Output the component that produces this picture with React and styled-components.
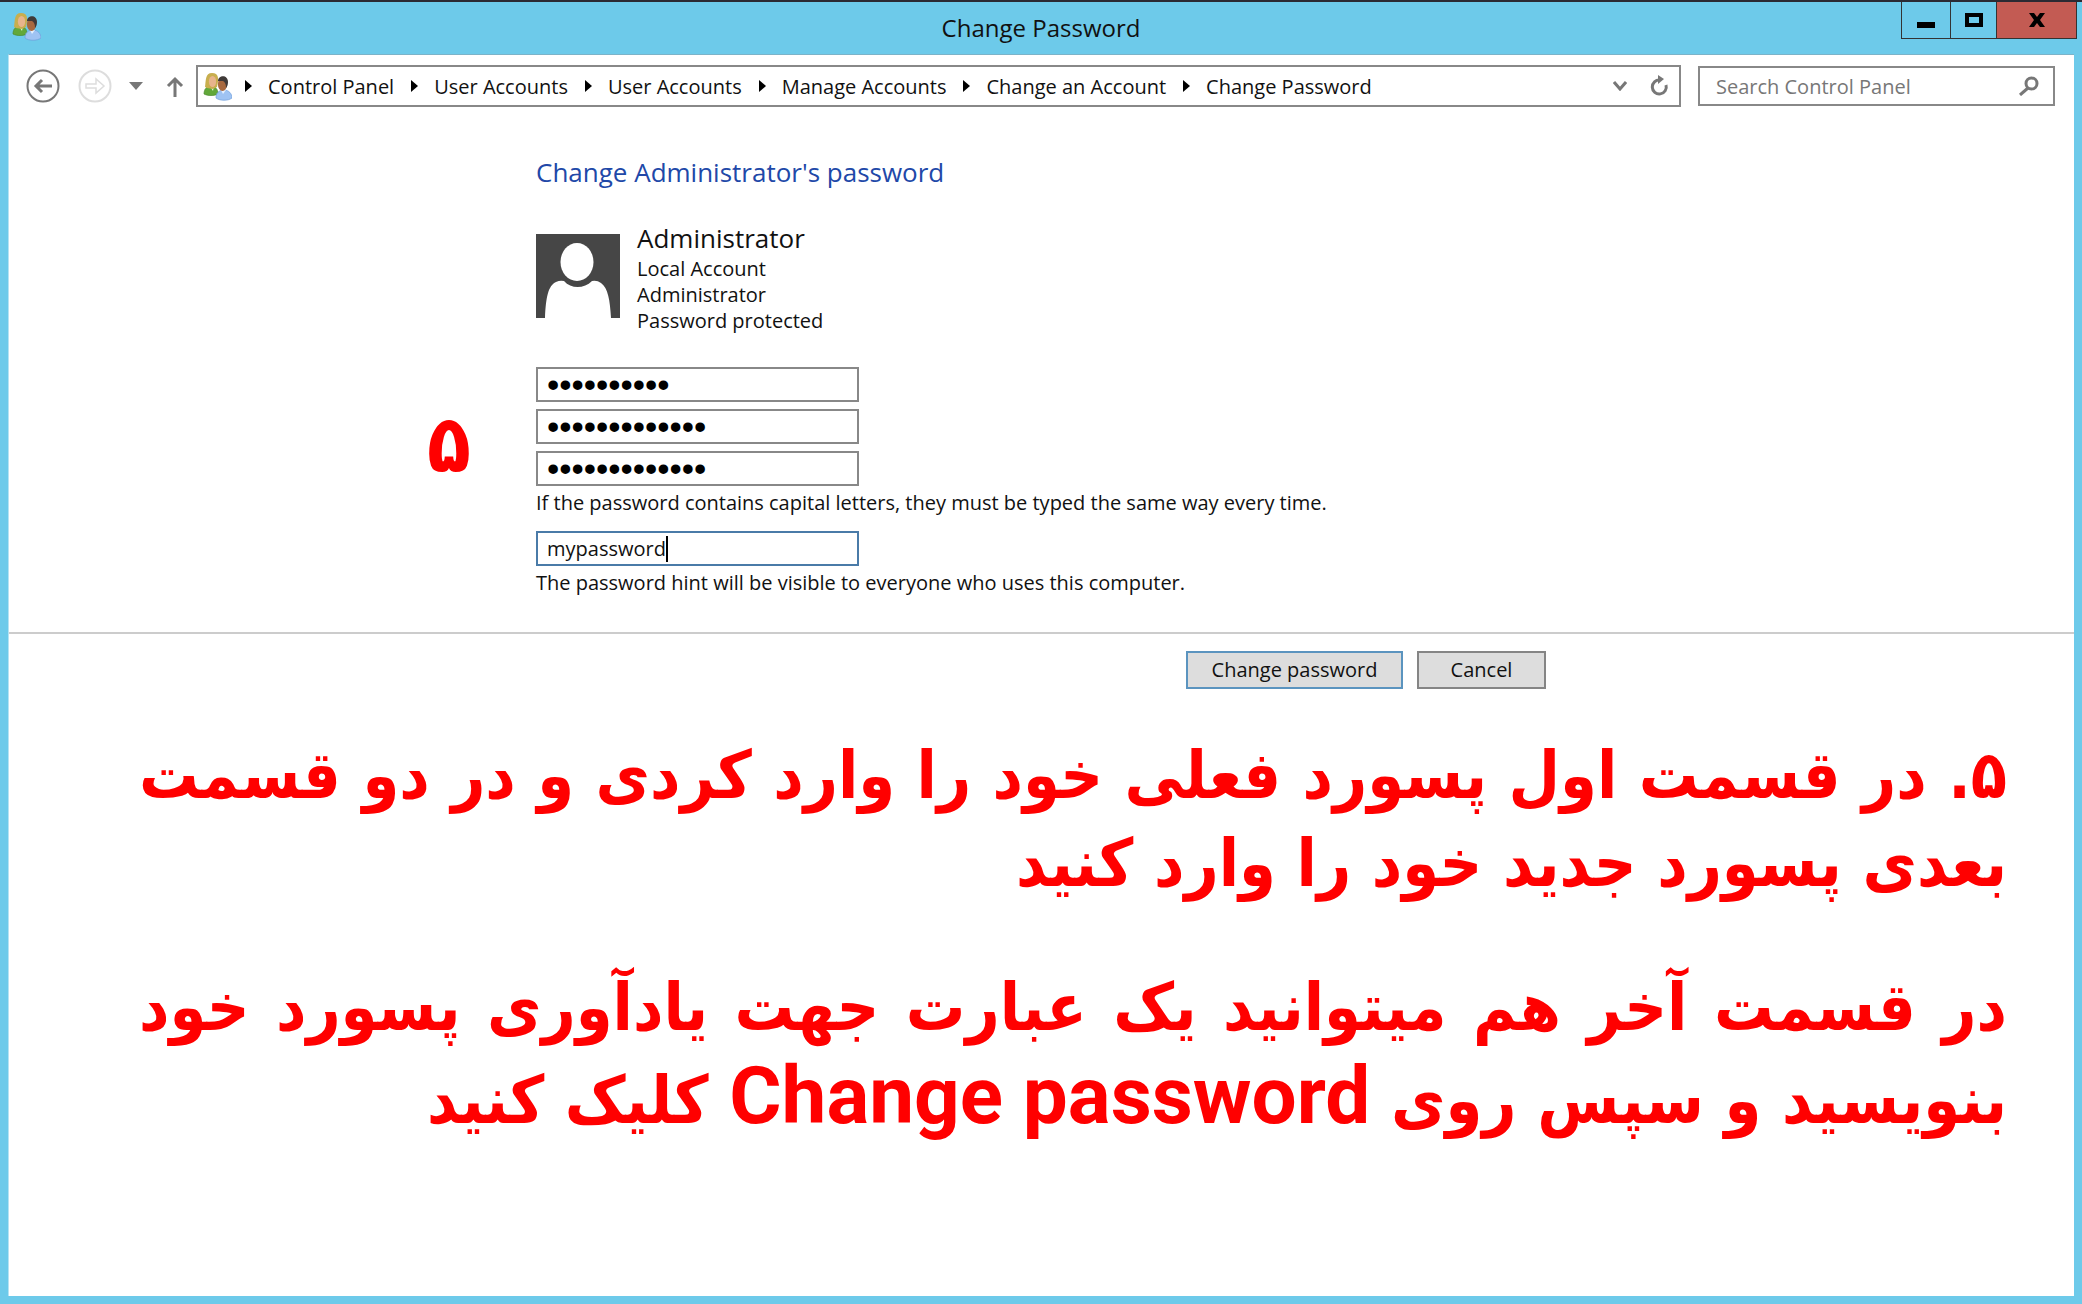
import React, { useState } from 'react';
import styled, { createGlobalStyle } from 'styled-components';

const GlobalStyle = createGlobalStyle`
  * {
    box-sizing: border-box;
  }
  body {
    margin: 0;
    background: #6dcaea;
    color: #111;
    font-family: 'Open Sans', 'Noto Sans', sans-serif;
    font-size: 20px;
  }
  button, input {
    font: inherit;
    color: inherit;
  }
  h1, h2, p {
    margin: 0;
    font-weight: inherit;
  }
`;

const Window = styled.div`
  display: flex;
  flex-direction: column;
  min-height: 100vh;
  padding: 0 8px 8px;
  border-top: 2px solid #2b2a33;
  background: #6dcaea;
`;

const TitleBar = styled.header`
  display: grid;
  grid-template-columns: 1fr auto 1fr;
  height: 52px;
`;

const TitleIcon = styled.div`
  padding: 10px 4px;
`;

const WindowTitle = styled.h1`
  font-size: 24px;
  line-height: 52px;
`;

const WindowButtons = styled.div`
  display: flex;
  justify-self: end;
  height: 37px;
  margin-right: -3px;
  border: 1px solid #333;
  border-top: 0;
`;

const WindowButton = styled.button`
  display: flex;
  align-items: center;
  justify-content: center;
  width: ${({ $width }) => $width}px;
  padding: 0;
  border: 0;
  border-left: ${({ $first }) => ($first ? 0 : '1px solid #333')};
  background: ${({ $close }) => ($close ? '#c35b53' : 'transparent')};
`;

const Client = styled.main`
  flex: 1;
  border-left: 1px solid #b5e3f3;
  border-top: 1px solid #7cb3c8;
  background: #fff;
`;

const NavBar = styled.div`
  display: flex;
  align-items: center;
  padding: 10px 19px 0 17px;
`;

const IconButton = styled.button`
  display: flex;
  align-items: center;
  justify-content: center;
  width: ${({ $width }) => $width || 34}px;
  height: 34px;
  margin-right: ${({ $gap }) => $gap || 0}px;
  padding: 0;
  border: 0;
  background: none;
`;

const AddressBar = styled.nav`
  display: flex;
  flex: 1;
  align-items: center;
  height: 42px;
  padding: 0 5px;
  border: 2px solid #888;
`;

const Crumbs = styled.ol`
  display: flex;
  flex: 1;
  margin: 0;
  padding: 0;
  list-style: none;
`;

const Crumb = styled.li`
  display: flex;
  align-items: center;
  gap: 16px;
  padding-left: ${({ $first }) => ($first ? 13 : 17)}px;

  a {
    color: inherit;
    text-decoration: none;
  }
`;

const SearchBox = styled.label`
  display: flex;
  align-items: center;
  width: 357px;
  height: 40px;
  margin-left: 17px;
  padding: 0 14px 0 16px;
  border: 2px solid #888;
`;

const SearchInput = styled.input`
  flex: 1;
  min-width: 0;
  padding: 0;
  border: 0;
  outline: 0;

  &::placeholder {
    color: #777;
    opacity: 1;
  }
`;

const Content = styled.section`
  padding: 49px 24px 36px 527px;
`;

const Heading = styled.h2`
  color: #2148a8;
  font-size: 26px;
  line-height: 32px;
`;

const Account = styled.div`
  display: flex;
  gap: 17px;
  margin-top: 33px;
`;

const Avatar = styled.svg`
  width: 84px;
  height: 84px;
  margin-top: 13px;
`;

const AccountName = styled.p`
  font-size: 26px;
  line-height: 35px;
`;

const AccountLine = styled.p`
  line-height: 26px;
`;

const FormRow = styled.div`
  display: flex;
  align-items: center;
  gap: 65px;
  margin: 33px 0 0 -109px;
`;

const StepNumber = styled.span`
  width: 44px;
  padding-top: 36px;
  color: #f00;
  font: 700 80px/72px 'DejaVu Sans Condensed', 'DejaVu Sans', sans-serif;
`;

const Fields = styled.div`
  display: flex;
  flex-direction: column;
  gap: 7px;
`;

const PasswordInput = styled.input`
  width: 323px;
  height: 35px;
  padding: 0 9px;
  border: 2px solid #888;
  outline: 0;
  color: #000;
  font: 35px/31px 'Liberation Sans', sans-serif;
`;

const HintField = styled.div`
  display: flex;
  align-items: center;
  width: 323px;
  height: 35px;
  margin-top: 15px;
  padding: 0 9px;
  border: 2px solid #4a7ba8;
`;

const HintInput = styled.input`
  field-sizing: content;
  max-width: 100%;
  padding: 0;
  border: 0;
  outline: 0;
  caret-color: transparent;
`;

const Caret = styled.span`
  width: 2px;
  height: 26px;
  background: #000;
`;

const Note = styled.p`
  padding-top: 4px;
  line-height: 26px;
`;

const Actions = styled.div`
  display: flex;
  gap: 14px;
  padding: 17px 0 0 1177px;
  border-top: 2px solid #ccc;
`;

const ActionButton = styled.button`
  width: ${({ $primary }) => ($primary ? 217 : 129)}px;
  height: 38px;
  padding: 0;
  border: 2px solid ${({ $primary }) => ($primary ? '#5b94bf' : '#858585')};
  background: #ddd;
  line-height: 32px;
`;

const Instructions = styled.section`
  display: flex;
  flex-direction: column;
  gap: 56px;
  padding: 43px 67px 0 130px;
  color: #f00;
  font: 700 66px/88px 'DejaVu Sans Condensed', 'DejaVu Sans', sans-serif;
`;

const Line = styled.span`
  display: block;
  white-space: nowrap;
  text-align-last: ${({ $full }) => ($full ? 'justify' : 'start')};
`;

const Latin = styled.bdi`
  font: 700 80px/88px Roboto, sans-serif;
`;

const UsersIcon = () => (
  <svg width="29" height="29" viewBox="0 0 29 29" aria-hidden="true">
    <path d="M1 22c0-5 3-8 7-8s7 3 7 8c-4 2-10 2-14 0z" fill="#62a83a" stroke="#4b8a2d" strokeWidth=".7" />
    <path d="M7 14h4l-1 5z" fill="#eafadb" />
    <path d="M2 15C3 9 2 1 9 1s7 6 5 14l-4 2-6-1z" fill="#c8ae4e" />
    <ellipse cx="9.500" cy="9.500" rx="3.600" ry="5.500" fill="#e8b48c" />
    <path d="M13 26c0-5 3-8 8-8s8 4 8 8c-4 3-12 3-16 0z" fill="#9fc3f3" stroke="#6f9edb" strokeWidth=".7" />
    <path d="M18 18h5l-3 4z" fill="#e6f1ff" />
    <ellipse cx="19.500" cy="12" rx="4.600" ry="7" fill="#a8693f" />
    <path d="M15 9c0-6 10-7 10 1 0 3-1 5-2 6 0-4-1-6-3-7z" fill="#403a38" />
  </svg>
);

const CrumbArrow = () => (
  <svg width="7" height="12" viewBox="0 0 7 12" aria-hidden="true">
    <path d="M0 0l7 6-7 6z" fill="#000" />
  </svg>
);

const crumbs = [
  'Control Panel',
  'User Accounts',
  'User Accounts',
  'Manage Accounts',
  'Change an Account',
  'Change Password'
];

const initialPasswords = [
  { label: 'Current password', value: 'oldpasswrd' },
  { label: 'New password', value: 'newpassword12' },
  { label: 'Confirm new password', value: 'newpassword12' }
];

export default function App() {
  const [passwords, setPasswords] = useState(initialPasswords);
  const [hint, setHint] = useState('mypassword');

  const changePassword = (value, idx) => {
    setPasswords(passwords.map((el, i) => (i === idx ? { ...el, value } : el)));
  };

  return (
    <Window>
      <GlobalStyle />
      <TitleBar>
        <TitleIcon>
          <UsersIcon />
        </TitleIcon>
        <WindowTitle>Change Password</WindowTitle>
        <WindowButtons>
          <WindowButton $width={48} $first aria-label="Minimize">
            <svg width="18" height="18">
              <path d="M0 11h18v6H0z" />
            </svg>
          </WindowButton>
          <WindowButton $width={46} aria-label="Maximize">
            <svg width="18" height="14">
              <path d="M2 2h14v10H2z" fill="none" stroke="#000" strokeWidth="4" />
            </svg>
          </WindowButton>
          <WindowButton $width={80} $close aria-label="Close">
            <svg width="16" height="14">
              <path d="M0 0h5l3 4 3-4h5l-5 7 5 7h-5l-3-4-3 4H0l5-7z" />
            </svg>
          </WindowButton>
        </WindowButtons>
      </TitleBar>
      <Client>
        <NavBar>
          <IconButton $gap={18} aria-label="Back">
            <svg width="34" height="34" fill="none" stroke="#777">
              <circle cx="17" cy="17" r="15.500" strokeWidth="2" />
              <path d="M26 17H10M16 11l-6 6 6 6" strokeWidth="3" />
            </svg>
          </IconButton>
          <IconButton $gap={17} aria-label="Forward">
            <svg width="34" height="34" fill="none" stroke="#ddd">
              <circle cx="17" cy="17" r="15.500" strokeWidth="2" />
              <path d="M8 15h10v-5l8 7-8 7v-5H8z" strokeWidth="1.500" />
            </svg>
          </IconButton>
          <IconButton $width={14} $gap={23} aria-label="Recent locations">
            <svg width="14" height="8">
              <path d="M0 0h14L7 8z" fill="#777" />
            </svg>
          </IconButton>
          <IconButton $width={18} $gap={12} aria-label="Up">
            <svg width="18" height="21" fill="none" stroke="#777" strokeWidth="3">
              <path d="M9 21V3M2 10l7-7 7 7" />
            </svg>
          </IconButton>
          <AddressBar aria-label="Address">
            <UsersIcon />
            <Crumbs>
              {crumbs.map((el, idx) => (
                <Crumb key={idx} $first={idx === 0}>
                  <CrumbArrow />
                  <a href="#">{el}</a>
                </Crumb>
              ))}
            </Crumbs>
            <IconButton $width={14} $gap={22} aria-label="Previous locations">
              <svg width="14" height="10" fill="none" stroke="#777" strokeWidth="3">
                <path d="M1 1l6 7 6-7" />
              </svg>
            </IconButton>
            <IconButton $width={20} $gap={5} aria-label="Refresh">
              <svg width="20" height="22" viewBox="0 0 20 22">
                <path d="M11 5a7 7 0 1 0 6 5" fill="none" stroke="#777" strokeWidth="3" />
                <path d="M9 0l6 4-6 5z" fill="#777" />
              </svg>
            </IconButton>
          </AddressBar>
          <SearchBox>
            <SearchInput type="text" placeholder="Search Control Panel" aria-label="Search Control Panel" />
            <svg width="20" height="20" fill="none" stroke="#777" strokeWidth="3">
              <circle cx="12.500" cy="7.500" r="5.500" />
              <path d="M9 12l-8 7" />
            </svg>
          </SearchBox>
        </NavBar>

        <Content>
          <Heading>Change Administrator's password</Heading>
          <Account>
            <Avatar viewBox="0 0 84 84" aria-hidden="true">
              <path d="M0 0h84v84H0z" fill="#464646" />
              <path d="M9 84c1-21 3-32 11-36q4-2 8-1c7 8 20 8 28 0q5-1 9 2c7 5 9 17 10 35z" fill="#fff" />
              <ellipse cx="41" cy="28" rx="16.500" ry="19" fill="#fff" />
            </Avatar>
            <div>
              <AccountName>Administrator</AccountName>
              <AccountLine>Local Account</AccountLine>
              <AccountLine>Administrator</AccountLine>
              <AccountLine>Password protected</AccountLine>
            </div>
          </Account>
          <FormRow>
            <StepNumber>۵</StepNumber>
            <Fields>
              {passwords.map((el, idx) => (
                <PasswordInput
                  key={el.label}
                  type="password"
                  aria-label={el.label}
                  value={el.value}
                  onChange={e => changePassword(e.target.value, idx)}
                />
              ))}
            </Fields>
          </FormRow>
          <Note>If the password contains capital letters, they must be typed the same way every time.</Note>
          <HintField>
            <HintInput
              type="text"
              aria-label="Password hint"
              value={hint}
              onChange={e => setHint(e.target.value)}
            />
            <Caret />
          </HintField>
          <Note>The password hint will be visible to everyone who uses this computer.</Note>
        </Content>

        <Actions>
          <ActionButton $primary>Change password</ActionButton>
          <ActionButton>Cancel</ActionButton>
        </Actions>

        <Instructions dir="rtl" lang="fa">
          <p>
            <Line $full>۵. در قسمت اول پسورد فعلی خود را وارد کردی و در دو قسمت</Line>
            <Line>بعدی پسورد جدید خود را وارد کنید</Line>
          </p>
          <p>
            <Line $full>در قسمت آخر هم میتوانید یک عبارت جهت یادآوری پسورد خود</Line>
            <Line>
              بنویسید و سپس روی <Latin>Change password</Latin> کلیک کنید
            </Line>
          </p>
        </Instructions>
      </Client>
    </Window>
  );
}
